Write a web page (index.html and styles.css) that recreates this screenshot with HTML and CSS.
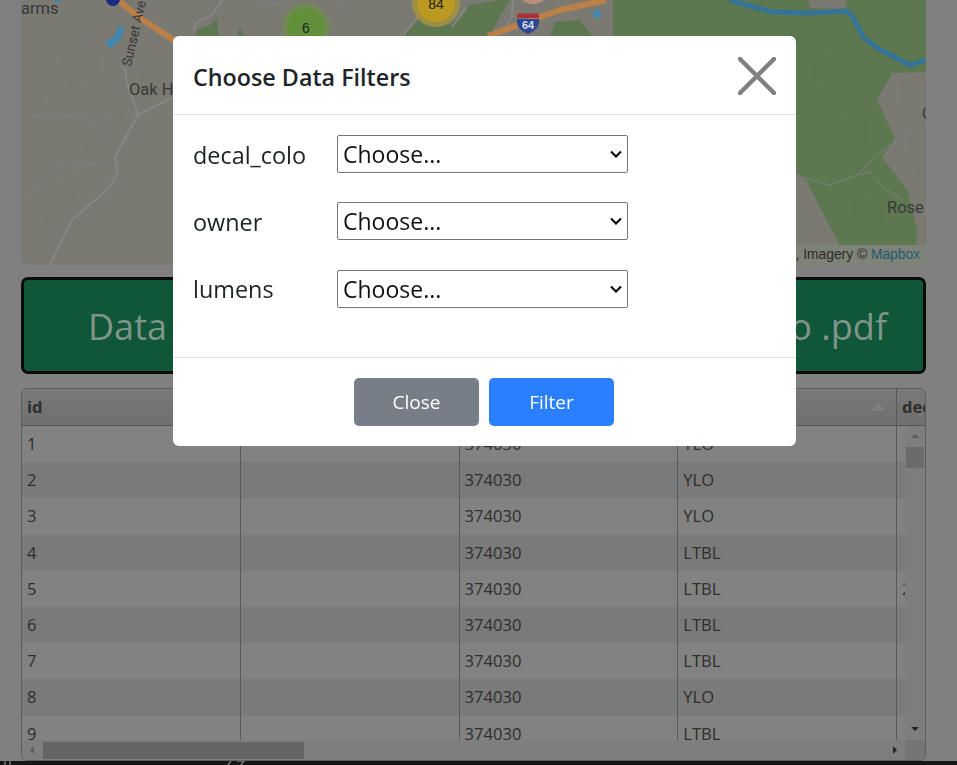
FILE: index.html
```html
<!DOCTYPE html>
<html lang="en">
<head>
  <meta charset="UTF-8" />
  <meta name="viewport" content="width=device-width, initial-scale=1.0"/>
  <title>Choose Data Filters</title>
  <link rel="stylesheet" href="styles.css">
</head>
<body>
  <div class="page">
    <div class="map">
      <svg class="map-svg" viewBox="21 0 905 265" width="905" height="265">
        <!-- faint terrain -->
        <path class="terrain" d="M60 55 L95 40 L100 75 L70 90 Z M90 125 L125 110 L110 170 L80 165 Z M40 190 L85 170 L70 215 L45 225 Z M25 70 L50 75 L40 110 L25 105 Z"/>
        <path class="terrain" d="M900 80 L926 78 L926 190 L915 170 L905 130 Z"/>

        <!-- park land -->
        <path class="park" d="M403 36 L420 18 L450 25 L470 5 L500 0 L510 0 L498 20 L490 36 Z"/>
        <path class="park" d="M613 0 L926 0 L926 72 L892 73 L877 100 L895 138 L882 157 L907 190 L917 230 L915 265 L850 265 L805 178 L700 120 L613 120 Z"/>
        <path class="park-dark" d="M550 36 L555 22 L580 20 L592 36 Z"/>
        <path class="park-dark" d="M810 60 L850 45 L860 65 L815 85 Z M830 120 L870 110 L865 150 L835 155 Z M850 200 L880 195 L885 225 L860 235 Z"/>
        <path class="land" d="M808 0 L847 0 L845 9 L810 8 Z"/>
        <path class="park" d="M195 36 L197 30 L210 25 L217 18 L218 36 Z M237 36 L240 27 L244 36 Z"/>
        <circle class="park" cx="142" cy="80" r="1.5"/>
        <circle class="pond" cx="597" cy="14" r="4"/>
        <path class="pond" d="M105 43 L115 35 L119 26 L124 28 L122 37 L113 47 L110 48 Z M54 0 L61 0 L58 3 Z"/>
        <circle class="salmon" cx="533" cy="-13" r="17"/>

        <!-- roads -->
        <g class="road">
          <path d="M173 97 L138 115 L115 157 L118 173 L110 187 L72 220 L50 265"/>
          <path d="M125 68 L127 83 L138 115"/>
          <path d="M417 17 L403 36"/>
          <path d="M452 27 L467 7"/>
          <path d="M195 30 C192 20 205 20 212 15 L222 0"/>
          <path d="M502 33 L512 17 L513 0"/>
        </g>
        <g class="road-thin">
          <path d="M805 178 L830 185 L857 175 L880 153 L926 120"/>
          <path d="M857 175 L870 172 L883 187 L903 200"/>
          <path d="M30 115 L90 118 L110 135 M25 200 L60 160 L110 165"/>
          <path d="M250 0 L290 5 M330 5 L345 0"/>
        </g>
        <path class="highway" d="M118 0 L130 10 L143 20 L163 33 L175 41"/>
        <path class="highway" d="M488 36 L560 10 L606 0"/>
        <path class="river" d="M730 0 L747 5 L773 12 L810 13 L847 11 L853 17 L863 37 L877 48 L910 65 L926 60"/>
        <circle class="marker" cx="113" cy="-1" r="7"/>

        <!-- clusters -->
        <circle class="halo-green" cx="306" cy="27" r="24"/>
        <circle class="dot-green" cx="306" cy="27" r="19"/>
        <text class="cluster-num" x="306" y="33">6</text>
        <circle class="halo-yellow" cx="436" cy="3" r="24"/>
        <circle class="dot-yellow" cx="436" cy="3" r="19"/>
        <text class="cluster-num" x="436" y="9">84</text>

        <!-- I-64 shield -->
        <path class="shield-blue" d="M517 19 L539 19 C540 27 535 31 528 34 C521 31 516 27 517 19 Z"/>
        <path class="shield-red" d="M517 14 L520 13 L522 14 L525 13 L528 14 L531 13 L534 14 L536 13 L539 14 L539 18 L517 18 Z"/>
        <text class="shield-num" x="528" y="29">64</text>

        <!-- labels -->
        <text class="place" x="21" y="14">arms</text>
        <text class="place" x="129" y="95">Oak Hill</text>
        <text class="place" x="887" y="213">Rose</text>
        <text class="place" x="922" y="119">Crozet</text>
        <text class="street" transform="translate(131 67) rotate(-77)">Sunset Ave</text>
      </svg>
      <div class="attribution">Map data © OpenStreetMap, Imagery © <span class="attr-link">Mapbox</span></div>
    </div>

    <div class="data-btn"><span>Data</span><span>to .pdf</span></div>

    <div class="table-box">
      <div class="thead">
        <div class="th">id</div>
        <div class="th">name</div>
        <div class="th">zip</div>
        <div class="th">color<span class="sort"></span></div>
        <div class="th th-last">decal_colo</div>
      </div>
      <div class="tbody-wrap">
        <div class="tbody">
          <div class="row"><div class="td">1</div><div class="td"></div><div class="td">374030</div><div class="td">YLO</div></div>
          <div class="row"><div class="td">2</div><div class="td"></div><div class="td">374030</div><div class="td">YLO</div></div>
          <div class="row"><div class="td">3</div><div class="td"></div><div class="td">374030</div><div class="td">YLO</div></div>
          <div class="row"><div class="td">4</div><div class="td"></div><div class="td">374030</div><div class="td">LTBL</div></div>
          <div class="row"><div class="td">5</div><div class="td"></div><div class="td">374030</div><div class="td">LTBL</div><div class="td td-last">2</div></div>
          <div class="row"><div class="td">6</div><div class="td"></div><div class="td">374030</div><div class="td">LTBL</div></div>
          <div class="row"><div class="td">7</div><div class="td"></div><div class="td">374030</div><div class="td">LTBL</div></div>
          <div class="row"><div class="td">8</div><div class="td"></div><div class="td">374030</div><div class="td">YLO</div></div>
          <div class="row"><div class="td">9</div><div class="td"></div><div class="td">374030</div><div class="td">LTBL</div></div>
        </div>
        <div class="vscroll">
          <div class="arrow-up"></div>
          <div class="vthumb"></div>
          <div class="vspace"></div>
          <div class="arrow-down"></div>
        </div>
      </div>
      <div class="hscroll">
        <div class="arrow-left"></div>
        <div class="hthumb"></div>
        <div class="hspace"></div>
        <div class="arrow-right"></div>
        <div class="corner"></div>
      </div>
    </div>
  </div>
  <div class="bottom-strip">
    <svg class="strip-marks" viewBox="0 0 957 4" width="957" height="4"><path d="M5 0 V4 M10 0 V4 M228 4 L231 0 M237 0 L244 0 L241 4"/></svg>
  </div>

  <div class="modal-layer">
    <div class="modal">
      <div class="modal-header">
        <div class="modal-title">Choose Data Filters</div>
        <svg class="close-x" viewBox="0 0 38 38" width="38" height="38">
          <path d="M2 2 L36 36 M36 2 L2 36"/>
        </svg>
      </div>
      <div class="modal-body">
        <div class="filter-row">
          <label class="filter-label">decal_colo</label>
          <div class="select-wrap">
            <select class="filter-select"><option>Choose...</option></select>
            <svg class="chevron" viewBox="0 0 12 8" width="12" height="8"><path d="M1 1.5 L6 6.5 L11 1.5"/></svg>
          </div>
        </div>
        <div class="filter-row">
          <label class="filter-label">owner</label>
          <div class="select-wrap">
            <select class="filter-select"><option>Choose...</option></select>
            <svg class="chevron" viewBox="0 0 12 8" width="12" height="8"><path d="M1 1.5 L6 6.5 L11 1.5"/></svg>
          </div>
        </div>
        <div class="filter-row">
          <label class="filter-label">lumens</label>
          <div class="select-wrap">
            <select class="filter-select"><option>Choose...</option></select>
            <svg class="chevron" viewBox="0 0 12 8" width="12" height="8"><path d="M1 1.5 L6 6.5 L11 1.5"/></svg>
          </div>
        </div>
      </div>
      <div class="modal-footer">
        <button class="btn btn-close">Close</button>
        <button class="btn btn-filter">Filter</button>
      </div>
    </div>
  </div>
</body>
</html>
```

FILE: styles.css
```css
/* colours behind the modal are written as they look under the dim backdrop */
html, body {
  height: 100%;
}
body {
  margin: 0;
  height: 765px;
  overflow: hidden;
  background-color: #808080;
  color: #2e2e2e;
  font-family: "Open Sans", "Noto Sans", sans-serif;
  display: flex;
  flex-direction: column;
}
.page {
  padding: 0 31px 0 21px;
  height: 761px;
  box-sizing: border-box;
}

/* map */
.map {
  position: relative;
  height: 265px;
  width: 905px;
  border-radius: 0 0 6px 6px;
  overflow: hidden;
  background-color: #7a7972;
}
.map-svg {
  display: block;
}
.terrain { fill: #797871; }
.park { fill: #5d7851; }
.park-dark { fill: #5c7750; }
.land { fill: #7a7972; }
.pond { fill: #4088ad; }
.salmon { fill: #b98f79; }
.road { fill: none; stroke: #878782; stroke-width: 2; }
.road-thin { fill: none; stroke: #7f7f79; stroke-width: 1; }
.highway { fill: none; stroke: #bb8048; stroke-width: 6; }
.river { fill: none; stroke: #357498; stroke-width: 5; }
.marker { fill: #1a2a86; }
.halo-green { fill: #73895a; }
.dot-green { fill: #62903a; }
.halo-yellow { fill: #9c8e42; }
.dot-yellow { fill: #bc9a22; }
.cluster-num {
  font-family: "Liberation Sans", sans-serif;
  font-size: 14px;
  text-anchor: middle;
  fill: #222;
}
.shield-blue { fill: #2c4694; }
.shield-red { fill: #a8323a; }
.shield-num {
  font-family: "Liberation Sans", sans-serif;
  font-size: 11px;
  font-weight: bold;
  text-anchor: middle;
  fill: #d8dde8;
}
.place {
  font-family: "Roboto", sans-serif;
  font-size: 16.5px;
  fill: #38383a;
}
.street {
  font-family: "Roboto", sans-serif;
  font-size: 13.5px;
  fill: #38383a;
}
.attribution {
  position: absolute;
  right: 0;
  bottom: 0;
  height: 20px;
  line-height: 19px;
  padding: 0 6px 0 5px;
  background-color: #7f8277;
  font-family: "Liberation Sans", sans-serif;
  font-size: 13.8px;
  color: #2a2a2a;
  white-space: nowrap;
}
.attr-link {
  color: #1f5a75;
}

/* green button */
.data-btn {
  margin-top: 12px;
  height: 97px;
  box-sizing: border-box;
  padding: 2px 36px 0 64px;
  display: flex;
  justify-content: space-between;
  align-items: center;
  background-color: #105639;
  border: 3px solid #0b0b0b;
  border-radius: 7px;
  color: #7f958a;
  font-size: 36px;
}

/* table */
.table-box {
  margin-top: 14px;
  height: 373px;
  box-sizing: border-box;
  border: 1px solid #5e5e5e;
  border-radius: 6px;
  overflow: hidden;
  display: flex;
  flex-direction: column;
}
.thead {
  display: flex;
  flex: none;
  height: 37px;
  box-sizing: border-box;
  background: linear-gradient(#797979, #6f6f6f);
  border-bottom: 1px solid #545454;
}
.th {
  position: relative;
  flex: none;
  width: 218.75px;
  box-sizing: border-box;
  padding: 0 5px;
  border-right: 1px solid #585858;
  font-size: 16.6px;
  font-weight: 700;
  line-height: 36px;
  color: #2e2e2e;
  overflow: hidden;
}
.th-last {
  flex: 1;
  width: auto;
  border-right: none;
  white-space: nowrap;
}
.sort {
  position: absolute;
  right: 10px;
  top: 14px;
  border-left: 8px solid transparent;
  border-right: 8px solid transparent;
  border-bottom: 8px solid #7f7f7f;
}
.tbody-wrap {
  flex: 1;
  min-height: 0;
  display: flex;
}
.tbody {
  flex: none;
  width: 883px;
  overflow: hidden;
}
.row {
  display: flex;
  height: 36.2px;
}
.row:nth-child(odd) { background-color: #828282; }
.row:nth-child(even) { background-color: #7a7a7a; }
.td {
  flex: none;
  width: 218.75px;
  box-sizing: border-box;
  padding: 0 5px;
  border-right: 1px solid #595959;
  font-size: 16.6px;
  line-height: 36.2px;
  color: #2e2e2e;
}
.td-last {
  border-right: none;
}
.vscroll {
  flex: none;
  width: 20px;
  background-color: #7e7e7e;
  display: flex;
  flex-direction: column;
  align-items: center;
}
.arrow-up {
  margin-top: 8px;
  border-left: 4px solid transparent;
  border-right: 4px solid transparent;
  border-bottom: 4px solid #5c5c5c;
}
.vthumb {
  margin-top: 9px;
  width: 18px;
  height: 21px;
  background-color: #6b6b6b;
}
.vspace {
  flex: 1;
}
.arrow-down {
  margin-bottom: 9px;
  border-left: 4px solid transparent;
  border-right: 4px solid transparent;
  border-top: 4px solid #222;
}
.hscroll {
  flex: none;
  height: 20px;
  display: flex;
  align-items: center;
  background-color: #7e7e7e;
}
.arrow-left {
  margin-left: 8px;
  border-top: 4px solid transparent;
  border-bottom: 4px solid transparent;
  border-right: 4px solid #5c5c5c;
}
.hthumb {
  margin-left: 9px;
  width: 261px;
  height: 17px;
  background-color: #656565;
}
.hspace {
  flex: 1;
}
.arrow-right {
  margin-right: 8px;
  border-top: 4px solid transparent;
  border-bottom: 4px solid transparent;
  border-left: 4px solid #222;
}
.corner {
  width: 20px;
  height: 20px;
  background-color: #757575;
}
.bottom-strip {
  height: 4px;
  background-color: #161616;
}
.strip-marks {
  display: block;
}
.strip-marks path {
  fill: none;
  stroke: #777;
  stroke-width: 1.5;
}

/* modal */
.modal-layer {
  position: fixed;
  top: 36px;
  left: 173px;
}
.modal {
  width: 623px;
  height: 410px;
  background-color: #fff;
  border-radius: 6px;
  display: flex;
  flex-direction: column;
  color: #212529;
}
.modal-header {
  flex: none;
  height: 79px;
  box-sizing: border-box;
  padding: 3px 20px 0;
  display: flex;
  align-items: center;
  justify-content: space-between;
  border-bottom: 1px solid #dee2e6;
}
.modal-title {
  font-size: 23.3px;
  font-weight: 600;
  color: #212529;
}
.close-x {
  margin-top: -1px;
}
.close-x path {
  fill: none;
  stroke: #808080;
  stroke-width: 4.5;
  stroke-linecap: round;
}
.modal-body {
  flex: 1;
  padding: 20px 20px 0;
  display: flex;
  flex-direction: column;
  gap: 29.4px;
}
.filter-row {
  display: flex;
  align-items: center;
}
.filter-label {
  width: 144px;
  padding-top: 1px;
  font-size: 23.4px;
  color: #212529;
}
.select-wrap {
  position: relative;
  width: 291px;
  height: 38px;
}
.filter-select {
  display: block;
  appearance: none;
  width: 100%;
  height: 100%;
  padding: 0 0 0 5px;
  background-color: #fff;
  border: 1px solid #767676;
  border-radius: 2px;
  font-family: "Open Sans", sans-serif;
  font-size: 23px;
  color: #111;
}
.chevron {
  position: absolute;
  right: 6px;
  top: 15px;
  pointer-events: none;
}
.chevron path {
  fill: none;
  stroke: #111;
  stroke-width: 2.2;
}
.modal-footer {
  flex: none;
  height: 89px;
  box-sizing: border-box;
  padding: 20px 1px 0 0;
  border-top: 1px solid #dee2e6;
  display: flex;
  justify-content: center;
  align-items: flex-start;
  gap: 10px;
}
.btn {
  width: 125px;
  height: 48px;
  border: none;
  border-radius: 5px;
  color: #fff;
  font-family: "Open Sans", sans-serif;
  font-size: 19px;
  cursor: pointer;
}
.btn-close {
  background-color: #767f87;
}
.btn-filter {
  background-color: #2a7fff;
}
```
